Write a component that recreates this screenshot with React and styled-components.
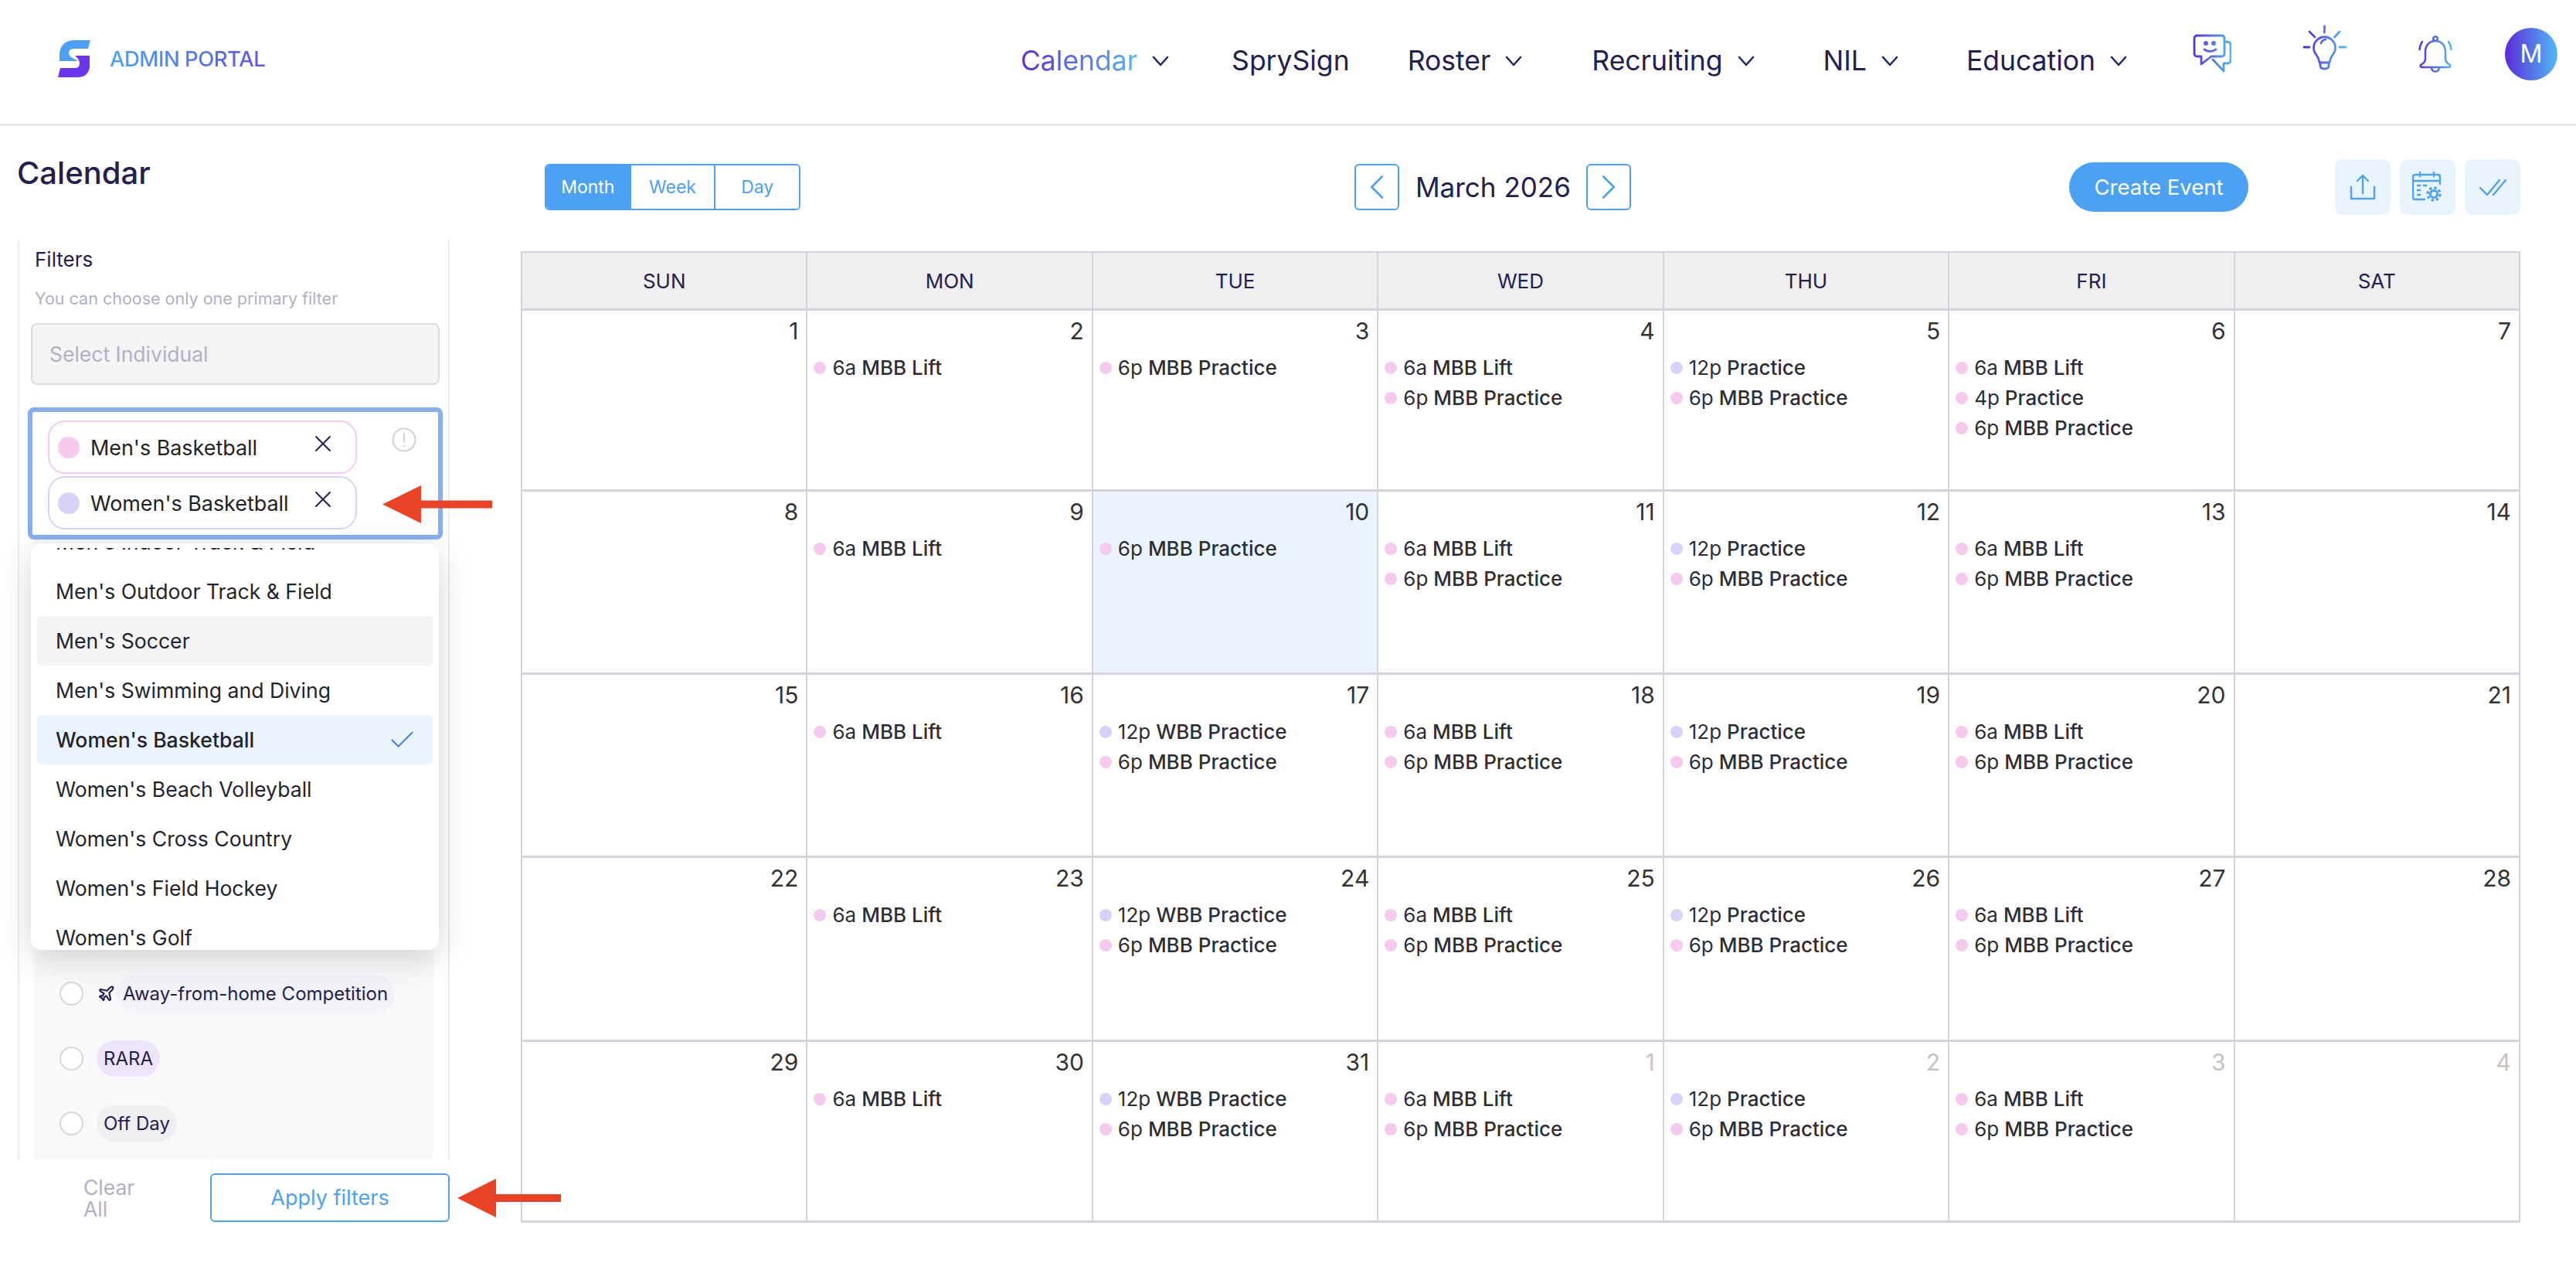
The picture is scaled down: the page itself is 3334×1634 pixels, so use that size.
import React from "react"
import styled, { createGlobalStyle } from "styled-components"
import { Check, ChevronLeft, ChevronRight, Plane, X } from "lucide-react"

const font = `Inter, "Open Sans", sans-serif`
const navy = "#23204f"
const blue = "#4da1f5"
const line = "#d3d2de"
const pink = "#f6c9ee"
const lavender = "#d9d2f8"
const muted = "#b2b0c4"

const GlobalStyle = createGlobalStyle`
  html, body {
    margin: 0;
    background: #fff;
    font-family: ${font};
    overflow: hidden;
  }
  * {
    box-sizing: border-box;
  }
`

const Page = styled.div`
  position: relative;
  width: 3334px;
  height: 1634px;
  background: #fff;
`

const Header = styled.header`
  display: flex;
  align-items: center;
  height: 163px;
  padding: 0 24px 3px 74px;
  border-bottom: 3px solid #e8e8e8;
`

const Brand = styled.div`
  display: flex;
  align-items: center;
  gap: 24px;
  margin-bottom: 6px;
  margin-right: auto;
`

const BrandName = styled.span`
  font-size: 27.5px;
  font-weight: 500;
  letter-spacing: -0.5px;
  background: linear-gradient(90deg, ${blue}, #5f55e8);
  -webkit-background-clip: text;
  background-clip: text;
  color: transparent;
`

const Nav = styled.nav`
  display: flex;
  align-items: center;
  margin-right: 85px;
`

const NavItem = styled.a`
  display: flex;
  align-items: center;
  gap: 19px;
  margin-left: ${p => p.$before}px;
  font-size: 35.5px;
  color: ${navy};
`

const NavLabel = styled.span`
  ${p => p.$active && `
    background: linear-gradient(90deg, #5a2bd8, #52b8f7);
    -webkit-background-clip: text;
    background-clip: text;
    color: transparent;
  `}
`

const HeaderIcons = styled.div`
  display: flex;
  align-items: center;
`

const HeaderIcon = styled.span`
  display: flex;
  margin-bottom: ${p => p.$lift}px;
  margin-right: ${p => p.$after}px;
`

const Avatar = styled.span`
  display: flex;
  align-items: center;
  justify-content: center;
  width: 68px;
  height: 68px;
  margin-bottom: 18px;
  border-radius: 50%;
  background: linear-gradient(90deg, #5a2bd8, #52b8f7);
  color: #fff;
  font-size: 32px;
`

const Body = styled.div`
  display: flex;
`

const Sidebar = styled.aside`
  flex: 0 0 674px;
  padding: 37px 92px 0 23px;
`

const Title = styled.h1`
  margin: 0 0 62px -1px;
  font-size: 40px;
  line-height: 48px;
  font-weight: 500;
  color: ${navy};
`

const FilterPanel = styled.section`
  display: flex;
  flex-direction: column;
  height: 1191px;
  padding: 10px 11px 0 15px;
  border-left: 2px solid #efefe8;
  border-right: 2px solid #efefe8;
`

const FilterLabel = styled.div`
  padding-left: 5px;
  font-size: 26px;
  line-height: 32px;
  color: ${navy};
`

const FilterHint = styled.div`
  margin-top: 19px;
  padding-left: 5px;
  font-size: 21.5px;
  line-height: 30px;
  color: ${muted};
`

const SelectBox = styled.div`
  display: flex;
  align-items: center;
  height: 80px;
  margin-top: 17px;
  padding-left: 22px;
  border: 2px solid #dcdcdc;
  border-radius: 8px;
  background: #f4f4f4;
  font-size: 26.5px;
  color: ${muted};
`

const MultiWrap = styled.div`
  position: relative;
  margin: 29px -4px 0;
`

const MultiBox = styled.div`
  display: flex;
  justify-content: space-between;
  height: 171px;
  padding: 11px 28px 0 20px;
  border: 6px solid #87aef0;
  border-radius: 8px;
`

const ChipStack = styled.div`
  display: flex;
  flex-direction: column;
  gap: 3px;
`

const Chip = styled.div`
  display: flex;
  align-items: center;
  width: 400px;
  height: 69px;
  padding: 0 26px 0 11px;
  border: 2px solid ${p => p.$color};
  border-radius: 22px;
  font-size: 26.9px;
  color: #222;
`

const ChipDot = styled.span`
  flex: none;
  width: 28px;
  height: 28px;
  margin-right: 14px;
  border-radius: 50%;
  background: ${p => p.$color};
`

const ChipClose = styled.span`
  display: flex;
  margin: -10px -2px 0 auto;
  color: ${navy};
`

const InfoIcon = styled.span`
  display: flex;
  margin-top: 9px;
`

const Dropdown = styled.div`
  position: absolute;
  top: 176px;
  left: 4px;
  z-index: 5;
  width: 528px;
  height: 526px;
  padding: 6px 8px 4px;
  border-radius: 14px;
  background: #fff;
  box-shadow: 0 12px 44px rgba(0, 0, 0, 0.16);
`

const Scroller = styled.div`
  height: 516px;
  overflow: hidden;
`

const OptionList = styled.div`
  margin-top: -40px;
`

const Option = styled.div`
  display: flex;
  align-items: center;
  justify-content: space-between;
  height: 64px;
  padding: 0 20px 0 24px;
  border-radius: 6px;
  font-size: 26.6px;
  font-weight: ${p => (p.$selected ? 500 : 400)};
  color: #23232b;
  background: ${p => (p.$selected ? "#e9f4fe" : p.$hover ? "#f4f4f4" : "transparent")};
`

const TypePanel = styled.div`
  flex: 1;
  display: flex;
  flex-direction: column;
  justify-content: flex-end;
  gap: 37px;
  margin: 0 8px 0 4px;
  padding: 0 0 24px 33px;
  background: #f8f9fb;
`

const TypeRow = styled.div`
  display: flex;
  align-items: center;
  color: ${navy};
`

const Radio = styled.span`
  flex: none;
  width: 31px;
  height: 31px;
  margin-right: 17px;
  border: 2px solid #d8d8d8;
  border-radius: 50%;
  background: #fff;
`

const TypePill = styled.span`
  display: flex;
  align-items: center;
  height: 47px;
  padding: 0 9px;
  border-radius: 24px;
  font-size: 24px;
  background: ${p => p.$bg};
`

const PlaneMark = styled.span`
  display: flex;
  margin: 0 1px 0 1px;
`

const SidebarFooter = styled.div`
  display: flex;
  align-items: center;
  justify-content: space-between;
  height: 63px;
  margin-top: 17px;
  padding-left: 85px;
`

const ClearButton = styled.div`
  width: 80px;
  font-size: 26.5px;
  line-height: 28px;
  color: ${muted};
`

const ApplyButton = styled.div`
  display: flex;
  align-items: center;
  justify-content: center;
  width: 310px;
  height: 63px;
  border: 2px solid ${blue};
  border-radius: 6px;
  font-size: 27px;
  color: ${blue};
`

const Main = styled.main`
  flex: 1;
  padding: 43px 74px 0 0;
`

const Toolbar = styled.div`
  display: flex;
  align-items: center;
  height: 72px;
  margin-bottom: 47px;
  padding-left: 31px;
`

const ViewSwitch = styled.div`
  display: flex;
  width: 331px;
  height: 60px;
  border: 2px solid ${blue};
  border-radius: 6px;
  overflow: hidden;
`

const ViewButton = styled.span`
  flex: 1;
  display: flex;
  align-items: center;
  justify-content: center;
  font-size: 23px;
  color: ${p => (p.$active ? "#fff" : blue)};
  background: ${p => (p.$active ? blue : "#fff")};
  & + & {
    border-left: 2px solid ${blue};
  }
`

const MonthNav = styled.div`
  display: flex;
  align-items: center;
  gap: 21px;
  margin-left: 717px;
`

const ArrowButton = styled.span`
  display: flex;
  align-items: center;
  justify-content: center;
  width: 58px;
  height: 60px;
  border: 2px solid ${blue};
  border-radius: 6px;
  color: ${blue};
`

const MonthLabel = styled.span`
  width: 200px;
  font-size: 35px;
  white-space: nowrap;
  color: ${navy};
`

const CreateButton = styled.span`
  display: flex;
  align-items: center;
  justify-content: center;
  width: 232px;
  height: 64px;
  margin-left: 567px;
  border-radius: 32px;
  background: ${blue};
  color: #fff;
  font-size: 27.5px;
`

const ToolGroup = styled.div`
  display: flex;
  gap: 12px;
  margin-left: 112px;
`

const ToolButton = styled.span`
  display: flex;
  align-items: center;
  justify-content: center;
  width: 72px;
  height: 72px;
  border-radius: 10px;
  background: #eaf4fe;
`

const Month = styled.div`
  display: grid;
  grid-template-columns: repeat(7, 1fr);
  grid-template-rows: 75px 234px 237px 237px 238px 234px;
  border-top: 2px solid ${line};
  border-left: 2px solid ${line};
`

const DayHead = styled.div`
  display: flex;
  align-items: center;
  justify-content: center;
  border-right: 2px solid ${line};
  border-bottom: 3px solid ${line};
  background: #efefef;
  font-size: 26px;
  color: ${navy};
`

const Cell = styled.div`
  padding: 10px 10px 0 8px;
  border-right: 2px solid ${line};
  border-bottom: 3px solid ${line};
  background: ${p => (p.$today ? "#eaf4fe" : "#fff")};
`

const DateNum = styled.div`
  margin-bottom: 12px;
  text-align: right;
  font-size: 30px;
  line-height: 32px;
  color: ${p => (p.$outside ? "#c4c4c4" : "#333")};
`

const Event = styled.div`
  display: flex;
  align-items: center;
  height: 39px;
  font-size: 26px;
  color: #2d2d33;
  white-space: nowrap;
`

const EventDot = styled.span`
  flex: none;
  width: 16px;
  height: 16px;
  margin-right: 8px;
  border-radius: 50%;
  background: ${p => p.$color};
`

const EventName = styled.span`
  margin-left: 7px;
  font-weight: 500;
`

const PointerArrow = styled.svg`
  position: absolute;
  left: ${p => p.$x}px;
  top: ${p => p.$y}px;
  z-index: 6;
`

const BlueStops = ({ id, x1, x2, from = "#5a2bd8", to = "#52b8f7" }) => (
  <defs>
    <linearGradient id={id} gradientUnits="userSpaceOnUse" x1={x1} y1="0" x2={x2} y2="0">
      <stop offset="0" stopColor={from} />
      <stop offset="1" stopColor={to} />
    </linearGradient>
  </defs>
)

const Logo = () => (
  <svg width="44" height="52" viewBox="14 15 44 52">
    <path fill={blue} d="M57 17 L54 28 H36 Q30 28 29 33 Q29 38 34 40 L41 44 H17 V34 Q19 17 37 17 Z" />
    <path fill="#6d35ee" d="M37 37 H56 V52 Q54 65 40 65 H15 L18 53 H37 Q43 53 43 47 Q43 42 37 37 Z" />
  </svg>
)

const NavChevron = () => (
  <svg width="22" height="14" viewBox="0 0 22 14" fill="none" stroke="#1c2a6d" strokeWidth="2.6" strokeLinecap="round" strokeLinejoin="round">
    <path d="M2 2 L11 12 L20 2" />
  </svg>
)

const ChatIcon = () => (
  <svg width="50" height="50" viewBox="0 0 50 50" fill="none" stroke="url(#chatGrad)" strokeWidth="2.8" strokeLinejoin="round" strokeLinecap="round">
    <BlueStops id="chatGrad" x1="0" x2="50" />
    <path d="M6 2 H37 Q41 2 41 6 V25 Q41 29 37 29 H24 L11 39 V29 H6 Q2 29 2 25 V6 Q2 2 6 2 Z" />
    <path d="M26 33 L40 48 V38 H45 Q49 38 49 33 V14 Q49 10 43 10" />
    <path d="M15 20 Q22 25 30 20" />
    <circle cx="17" cy="12" r="1.6" />
    <circle cx="27" cy="12" r="1.6" />
  </svg>
)

const BulbIcon = () => (
  <svg width="60" height="60" viewBox="0 0 60 60" fill="none" stroke="url(#bulbGrad)" strokeWidth="2.8" strokeLinecap="round" strokeLinejoin="round">
    <BlueStops id="bulbGrad" x1="4" x2="56" />
    <path d="M29.5 3 V11 M10 10 L17 17 M49 10 L42.5 17 M3 30 H10 M49 30 H57" />
    <path d="M36 50 Q37 44 40 40 A14 14 0 1 0 19 40 Q22 44 23 50 Z" />
    <path d="M24 50 V54 Q24 58 29.5 58 Q35 58 35 54 V50" />
    <path d="M25 25 Q26 21 31 20" />
  </svg>
)

const BellIcon = () => (
  <svg width="44" height="48" viewBox="0 0 44 48" fill="none" stroke="url(#bellGrad)" strokeWidth="2.5" strokeLinecap="round" strokeLinejoin="round">
    <BlueStops id="bellGrad" x1="0" x2="44" />
    <path d="M22 7 C13 7 9 14 9 21 V30 Q9 35 3 38 Q2 41 5 41 H39 Q42 41 41 38 Q35 35 35 30 V21 C35 14 31 7 22 7 Z" />
    <circle cx="22" cy="4" r="2.8" />
    <path d="M17 41 Q17 46.5 22 46.5 Q27 46.5 27 41" />
    <path d="M1.5 18 Q2 12 5 8 M42.5 18 Q42 12 39 8" />
  </svg>
)

const UploadIcon = () => (
  <svg width="34" height="34" viewBox="0 0 34 34" fill="none" stroke={blue} strokeWidth="2.4" strokeLinecap="round" strokeLinejoin="round">
    <path d="M17 25 V2 M10 9 L17 2 L24 9" />
    <path d="M2 17 V32 H32 V17" />
  </svg>
)

const CalendarGearIcon = () => (
  <svg width="40" height="40" viewBox="0 0 40 40" fill="none" stroke={blue} strokeWidth="2.4" strokeLinecap="round" strokeLinejoin="round">
    <path d="M16 36 H4 Q1 36 1 33 V7 Q1 4 4 4 H33 Q36 4 36 7 V16" />
    <path d="M1 12 H36 M10 1 V6 M28 1 V6" />
    <path d="M7 18 H10 M15 18 H18 M7 24 H10 M7 30 H10" strokeWidth="2.6" />
    <circle cx="28" cy="29" r="4.6" strokeWidth="3" />
    <circle cx="28" cy="29" r="8" strokeWidth="3.4" strokeDasharray="3.3 3" strokeLinecap="butt" />
  </svg>
)

const DoubleCheckIcon = () => (
  <svg width="36" height="24" viewBox="0 0 36 24" fill="none" stroke={blue} strokeWidth="2.4" strokeLinecap="round" strokeLinejoin="round">
    <path d="M2 13 L11 22 L27 3" />
    <path d="M19 22 L35 3" />
  </svg>
)

const AlertIcon = () => (
  <svg width="32" height="32" viewBox="0 0 32 32" fill="none" stroke={line} strokeWidth="2.2" strokeLinecap="round">
    <circle cx="16" cy="16" r="14.5" />
    <path d="M16 8 V19 M16 24 V24.2" />
  </svg>
)

const RedArrow = ({ x, y, width, headWidth, headHeight }) => (
  <PointerArrow $x={x} $y={y} width={width} height={headHeight} viewBox={`0 0 ${width} ${headHeight}`}>
    <path
      fill="#e94225"
      d={`M0 ${headHeight / 2} L${headWidth} 0 V${headHeight / 2 - 5} H${width} V${headHeight / 2 + 5} H${headWidth} V${headHeight} Z`}
    />
  </PointerArrow>
)

const lift = { time: "6a", name: "MBB Lift", color: pink }
const practice = { time: "6p", name: "MBB Practice", color: pink }
const noon = { time: "12p", name: "Practice", color: lavender }
const afternoon = { time: "4p", name: "Practice", color: pink }
const wbb = { time: "12p", name: "WBB Practice", color: lavender }

const dayNames = ["SUN", "MON", "TUE", "WED", "THU", "FRI", "SAT"]

const cells = [
  { day: 1 }, { day: 2, events: [lift] }, { day: 3, events: [practice] }, { day: 4, events: [lift, practice] },
  { day: 5, events: [noon, practice] }, { day: 6, events: [lift, afternoon, practice] }, { day: 7 },
  { day: 8 }, { day: 9, events: [lift] }, { day: 10, today: true, events: [practice] }, { day: 11, events: [lift, practice] },
  { day: 12, events: [noon, practice] }, { day: 13, events: [lift, practice] }, { day: 14 },
  { day: 15 }, { day: 16, events: [lift] }, { day: 17, events: [wbb, practice] }, { day: 18, events: [lift, practice] },
  { day: 19, events: [noon, practice] }, { day: 20, events: [lift, practice] }, { day: 21 },
  { day: 22 }, { day: 23, events: [lift] }, { day: 24, events: [wbb, practice] }, { day: 25, events: [lift, practice] },
  { day: 26, events: [noon, practice] }, { day: 27, events: [lift, practice] }, { day: 28 },
  { day: 29 }, { day: 30, events: [lift] }, { day: 31, events: [wbb, practice] }, { day: 1, outside: true, events: [lift, practice] },
  { day: 2, outside: true, events: [noon, practice] }, { day: 3, outside: true, events: [lift, practice] }, { day: 4, outside: true },
]

const navItems = [
  { label: "Calendar", active: true, menu: true, before: 0 },
  { label: "SprySign", before: 81 },
  { label: "Roster", menu: true, before: 75 },
  { label: "Recruiting", menu: true, before: 90 },
  { label: "NIL", menu: true, before: 89 },
  { label: "Education", menu: true, before: 88 },
]

const sports = [
  "Men's Indoor Track & Field",
  "Men's Outdoor Track & Field",
  "Men's Soccer",
  "Men's Swimming and Diving",
  "Women's Basketball",
  "Women's Beach Volleyball",
  "Women's Cross Country",
  "Women's Field Hockey",
  "Women's Golf",
]

const App = () => (
  <Page>
    <GlobalStyle />
    <Header>
      <Brand>
        <Logo />
        <BrandName>ADMIN PORTAL</BrandName>
      </Brand>
      <Nav>
        {navItems.map(item => (
          <NavItem key={item.label} $before={item.before}>
            <NavLabel $active={item.active}>{item.label}</NavLabel>
            {item.menu && <NavChevron />}
          </NavItem>
        ))}
      </Nav>
      <HeaderIcons>
        <HeaderIcon $lift={20} $after={91}><ChatIcon /></HeaderIcon>
        <HeaderIcon $lift={36} $after={91}><BulbIcon /></HeaderIcon>
        <HeaderIcon $lift={18} $after={68}><BellIcon /></HeaderIcon>
        <Avatar>M</Avatar>
      </HeaderIcons>
    </Header>

    <Body>
      <Sidebar>
        <Title>Calendar</Title>
        <FilterPanel>
          <FilterLabel>Filters</FilterLabel>
          <FilterHint>You can choose only one primary filter</FilterHint>
          <SelectBox>Select Individual</SelectBox>
          <MultiWrap>
            <MultiBox>
              <ChipStack>
                <Chip $color={pink}>
                  <ChipDot $color={pink} />
                  Men's Basketball
                  <ChipClose><X size={36} strokeWidth={1.3} /></ChipClose>
                </Chip>
                <Chip $color={lavender}>
                  <ChipDot $color={lavender} />
                  Women's Basketball
                  <ChipClose><X size={36} strokeWidth={1.3} /></ChipClose>
                </Chip>
              </ChipStack>
              <InfoIcon><AlertIcon /></InfoIcon>
            </MultiBox>
            <Dropdown>
              <Scroller>
                <OptionList>
                  {sports.map(sport => (
                    <Option key={sport} $hover={sport === "Men's Soccer"} $selected={sport === "Women's Basketball"}>
                      {sport}
                      {sport === "Women's Basketball" && <Check size={39} strokeWidth={1.2} color="#3b7bea" />}
                    </Option>
                  ))}
                </OptionList>
              </Scroller>
            </Dropdown>
          </MultiWrap>
          <TypePanel>
            <TypeRow>
              <Radio />
              <PlaneMark><Plane size={23} strokeWidth={2.2} /></PlaneMark>
              <TypePill $bg="#f1f3f8">Away-from-home Competition</TypePill>
            </TypeRow>
            <TypeRow>
              <Radio />
              <TypePill $bg="#ede6fb">RARA</TypePill>
            </TypeRow>
            <TypeRow>
              <Radio />
              <TypePill $bg="#efefef">Off Day</TypePill>
            </TypeRow>
          </TypePanel>
        </FilterPanel>
        <SidebarFooter>
          <ClearButton>Clear All</ClearButton>
          <ApplyButton>Apply filters</ApplyButton>
        </SidebarFooter>
      </Sidebar>

      <Main>
        <Toolbar>
          <ViewSwitch>
            <ViewButton $active>Month</ViewButton>
            <ViewButton>Week</ViewButton>
            <ViewButton>Day</ViewButton>
          </ViewSwitch>
          <MonthNav>
            <ArrowButton><ChevronLeft size={54} strokeWidth={1.2} /></ArrowButton>
            <MonthLabel>March 2026</MonthLabel>
            <ArrowButton><ChevronRight size={54} strokeWidth={1.2} /></ArrowButton>
          </MonthNav>
          <CreateButton>Create Event</CreateButton>
          <ToolGroup>
            <ToolButton><UploadIcon /></ToolButton>
            <ToolButton><CalendarGearIcon /></ToolButton>
            <ToolButton><DoubleCheckIcon /></ToolButton>
          </ToolGroup>
        </Toolbar>

        <Month>
          {dayNames.map(name => <DayHead key={name}>{name}</DayHead>)}
          {cells.map((cell, i) => (
            <Cell key={i} $today={cell.today}>
              <DateNum $outside={cell.outside}>{cell.day}</DateNum>
              {(cell.events || []).map((ev, j) => (
                <Event key={j}>
                  <EventDot $color={ev.color} />
                  {ev.time}
                  <EventName>{ev.name}</EventName>
                </Event>
              ))}
            </Cell>
          ))}
        </Month>
      </Main>
    </Body>

    <RedArrow x={495} y={628} width={142} headWidth={50} headHeight={49} />
    <RedArrow x={592} y={1525} width={134} headWidth={50} headHeight={50} />
  </Page>
)

export default App
